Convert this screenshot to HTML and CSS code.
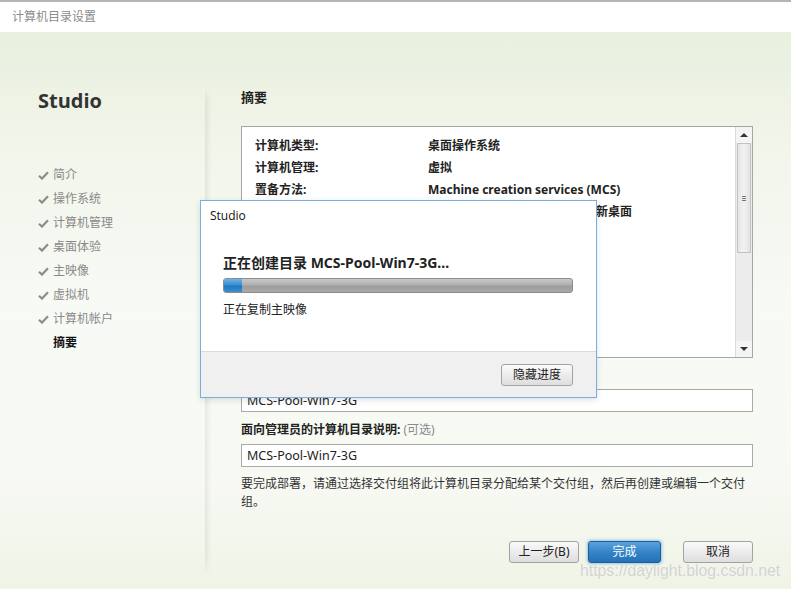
FILE: index.html
```html
<!DOCTYPE html>
<html lang="zh-CN">
<head>
<meta charset="utf-8">
<title>计算机目录设置</title>
<link rel="stylesheet" href="styles.css">
</head>
<body>
<div class="window">
  <div class="titlebar">计算机目录设置</div>
  <div class="main">
    <aside class="nav">
      <div class="brand">Studio</div>
      <ul class="steps">
        <li class="done"><svg class="check" viewBox="0 0 11 9" width="11" height="9"><path d="M1 4.8 L4 7.6 L10 1.2" fill="none" stroke="#8d8d8d" stroke-width="2.2"/></svg>简介</li>
        <li class="done"><svg class="check" viewBox="0 0 11 9" width="11" height="9"><path d="M1 4.8 L4 7.6 L10 1.2" fill="none" stroke="#8d8d8d" stroke-width="2.2"/></svg>操作系统</li>
        <li class="done"><svg class="check" viewBox="0 0 11 9" width="11" height="9"><path d="M1 4.8 L4 7.6 L10 1.2" fill="none" stroke="#8d8d8d" stroke-width="2.2"/></svg>计算机管理</li>
        <li class="done"><svg class="check" viewBox="0 0 11 9" width="11" height="9"><path d="M1 4.8 L4 7.6 L10 1.2" fill="none" stroke="#8d8d8d" stroke-width="2.2"/></svg>桌面体验</li>
        <li class="done"><svg class="check" viewBox="0 0 11 9" width="11" height="9"><path d="M1 4.8 L4 7.6 L10 1.2" fill="none" stroke="#8d8d8d" stroke-width="2.2"/></svg>主映像</li>
        <li class="done"><svg class="check" viewBox="0 0 11 9" width="11" height="9"><path d="M1 4.8 L4 7.6 L10 1.2" fill="none" stroke="#8d8d8d" stroke-width="2.2"/></svg>虚拟机</li>
        <li class="done"><svg class="check" viewBox="0 0 11 9" width="11" height="9"><path d="M1 4.8 L4 7.6 L10 1.2" fill="none" stroke="#8d8d8d" stroke-width="2.2"/></svg>计算机帐户</li>
        <li class="current">摘要</li>
      </ul>
    </aside>
    <section class="panel">
      <h2 class="heading">摘要</h2>
      <div class="summary">
        <div class="rows">
          <div class="row"><span class="k">计算机类型:</span><span class="v">桌面操作系统</span></div>
          <div class="row"><span class="k">计算机管理:</span><span class="v">虚拟</span></div>
          <div class="row"><span class="k">置备方法:</span><span class="v">Machine creation services (MCS)</span></div>
          <div class="row"><span class="k">桌面体验:</span><span class="v">用户每次登录时都会连接到一个新桌面</span></div>
        </div>
        <div class="scrollbar">
          <div class="sb-btn"><span class="tri-up"></span></div>
          <div class="sb-thumb"><span class="grip"></span></div>
          <div class="sb-track"></div>
          <div class="sb-btn"><span class="tri-down"></span></div>
        </div>
      </div>
      <div class="field-label">计算机目录名称:</div>
      <div class="input">MCS-Pool-Win7-3G</div>
      <div class="field-label">面向管理员的计算机目录说明: <span class="opt">(可选)</span></div>
      <div class="input">MCS-Pool-Win7-3G</div>
      <p class="note">要完成部署，请通过选择交付组将此计算机目录分配给某个交付组，然后再创建或编辑一个交付组。</p>
      <div class="buttons">
        <button class="btn">上一步(B)</button>
        <button class="btn primary">完成</button>
        <button class="btn cancel">取消</button>
      </div>
    </section>
  </div>

  <div class="dialog">
    <div class="dlg-body">
      <div class="dlg-title">Studio</div>
      <div class="dlg-heading">正在创建目录 MCS-Pool-Win7-3G...</div>
      <div class="progress"><div class="progress-fill" style="width:18px"></div></div>
      <div class="dlg-status">正在复制主映像</div>
    </div>
    <div class="dlg-footer">
      <button class="btn">隐藏进度</button>
    </div>
  </div>

  <div class="watermark">https://daylight.blog.csdn.net</div>
</div>
</body>
</html>
```

FILE: styles.css
```css
* { box-sizing: border-box; }
html, body { margin: 0; padding: 0; }
body {
  font-family: "Noto Sans", "Noto Sans CJK SC", sans-serif;
  font-size: 12px;
  color: #222;
  width: 791px;
  height: 589px;
  overflow: hidden;
}
.window {
  position: relative;
  width: 791px;
  height: 589px;
  display: flex;
  flex-direction: column;
  background: #fff;
}
.titlebar {
  height: 32px;
  border-top: 2px solid #b4b4b4;
  padding-left: 12px;
  line-height: 30px;
  color: #8c8c8c;
  font-size: 12px;
  background: #fff;
}
.main {
  flex: 1;
  display: flex;
  background: linear-gradient(to bottom, #e9f0de 0%, #f1f5ea 20%, #f8faf5 50%, #f7f9f3 80%, #eff4e6 100%);
}
.nav {
  width: 205px;
  padding: 57px 0 0 38px;
}
.brand {
  font-family: "Open Sans", "Noto Sans", sans-serif;
  font-weight: 700;
  font-size: 20px;
  line-height: 24px;
  color: #333;
}
.steps {
  list-style: none;
  margin: 50px 0 0 0;
  padding: 0;
}
.steps li {
  height: 24px;
  line-height: 24px;
  color: #8a8a8a;
  display: flex;
  align-items: center;
  padding-left: 15px;
  position: relative;
}
.steps li .check {
  position: absolute;
  left: 0;
  top: 8px;
}
.steps li.current {
  color: #111;
  font-weight: 700;
}
.panel {
  flex: 1;
  margin: 56px 0 14px 0;
  padding: 0 38px 0 36px;
  position: relative;
  display: flex;
  flex-direction: column;
}
.panel::before {
  content: "";
  position: absolute;
  left: 0;
  top: 0;
  bottom: 0;
  width: 7px;
  background: linear-gradient(to right, rgba(0,0,0,0.07), rgba(0,0,0,0.02) 4px, rgba(0,0,0,0));
  -webkit-mask-image: linear-gradient(to bottom, transparent, #000 12px, #000 calc(100% - 20px), transparent);
  mask-image: linear-gradient(to bottom, transparent, #000 12px, #000 calc(100% - 20px), transparent);
}
.heading {
  margin: 0;
  font-size: 13px;
  line-height: 18px;
  font-weight: 700;
  color: #222;
}
.summary {
  margin-top: 20px;
  height: 232px;
  border: 1px solid #a6a6a6;
  background: #fff;
  display: flex;
}
.rows {
  flex: 1;
  padding: 8px 0 0 13px;
}
.row {
  display: flex;
  height: 22px;
  line-height: 22px;
  font-weight: 700;
  color: #222;
  white-space: nowrap;
}
.row .k { width: 173px; }
.scrollbar {
  width: 17px;
  display: flex;
  flex-direction: column;
  background: #ececec;
  border-left: 1px solid #dcdcdc;
}
.sb-btn {
  height: 16px;
  display: flex;
  align-items: center;
  justify-content: center;
  background: #f4f4f4;
}
.tri-up {
  width: 0; height: 0;
  border-left: 4px solid transparent;
  border-right: 4px solid transparent;
  border-bottom: 4px solid #333;
}
.tri-down {
  width: 0; height: 0;
  border-left: 4px solid transparent;
  border-right: 4px solid transparent;
  border-top: 4px solid #333;
}
.sb-thumb {
  height: 110px;
  margin: 0 1px;
  background: linear-gradient(to right, #e6e6e6, #f2f2f2 50%, #e2e2e2);
  border: 1px solid #c2c2c2;
  display: flex;
  align-items: center;
  justify-content: center;
}
.grip {
  width: 4px;
  height: 5px;
  border-top: 1px solid #777;
  border-bottom: 1px solid #777;
  position: relative;
}
.grip::after {
  content: "";
  position: absolute;
  left: 0; right: 0;
  top: 1px;
  border-top: 1px solid #777;
}
.sb-track { flex: 1; }
.field-label {
  margin-top: 8px;
  line-height: 18px;
  font-weight: 700;
  color: #222;
}
.field-label + .input { margin-top: 5px; }
.input + .field-label { margin-top: 9px; }
.field-label .opt {
  font-weight: 400;
  color: #8a8a8a;
}
.input {
  height: 23px;
  border: 1px solid #a9a9a9;
  background: #fff;
  padding-left: 5px;
  line-height: 21px;
  font-size: 12.5px;
  color: #222;
}
.note {
  margin: 8px 0 0 0;
  line-height: 18px;
  color: #333;
}
.buttons {
  margin-top: 30px;
  display: flex;
  justify-content: flex-end;
}
.btn {
  font-family: "Noto Sans", "Noto Sans CJK SC", sans-serif;
  font-size: 12px;
  height: 22px;
  width: 70px;
  padding: 0;
  border: 1px solid #a3a3a3;
  border-radius: 3px;
  background: linear-gradient(to bottom, #fafafa, #ececec 50%, #dedede);
  color: #222;
  line-height: 20px;
}
.btn.primary {
  width: 73px;
  margin-left: 9px;
  color: #fff;
  border-color: #1f5d98;
  background: linear-gradient(to bottom, #5aa3dc, #3584c8 50%, #2471b8);
  box-shadow: 0 0 3px 1px rgba(80,150,220,0.55);
}
.btn.cancel { margin-left: 22px; }

.dialog {
  position: absolute;
  left: 200px;
  top: 200px;
  width: 397px;
  height: 198px;
  border: 1px solid #79afe0;
  background: #fff;
  display: flex;
  flex-direction: column;
  box-shadow: 0 2px 6px rgba(0,0,0,0.12);
}
.dlg-body {
  height: 150px;
  padding: 7px 0 0 22px;
}
.dlg-title {
  margin-left: -13px;
  font-family: "Open Sans", "Noto Sans", sans-serif;
  font-size: 12px;
  line-height: 16px;
  color: #111;
}
.dlg-heading {
  margin-top: 29px;
  font-size: 14px;
  font-weight: 700;
  line-height: 20px;
  color: #222;
}
.progress {
  margin-top: 5px;
  width: 350px;
  height: 15px;
  border: 1px solid #8c8c8c;
  border-radius: 3px;
  background: linear-gradient(to bottom, #c9c9c9, #b0b0b0 45%, #9d9d9d 55%, #a9a9a9);
  overflow: hidden;
}
.progress-fill {
  height: 100%;
  background: linear-gradient(to bottom, #6cb3e6, #3a8ed0 45%, #1e77c0 55%, #3b8fd0);
}
.dlg-status {
  margin-top: 8px;
  line-height: 18px;
  color: #222;
}
.dlg-footer {
  flex: 1;
  border-top: 1px solid #dadada;
  background: #f0f0f0;
  display: flex;
  justify-content: flex-end;
  align-items: flex-start;
  padding: 12px 23px 0 0;
}
.dlg-footer .btn { width: 72px; }

.watermark {
  position: absolute;
  left: 580px;
  top: 561px;
  font-family: "Liberation Sans", sans-serif;
  font-size: 15.8px;
  line-height: 20px;
  color: #d2d2d2;
  text-shadow: 0 0 1px #fff;
}
```
